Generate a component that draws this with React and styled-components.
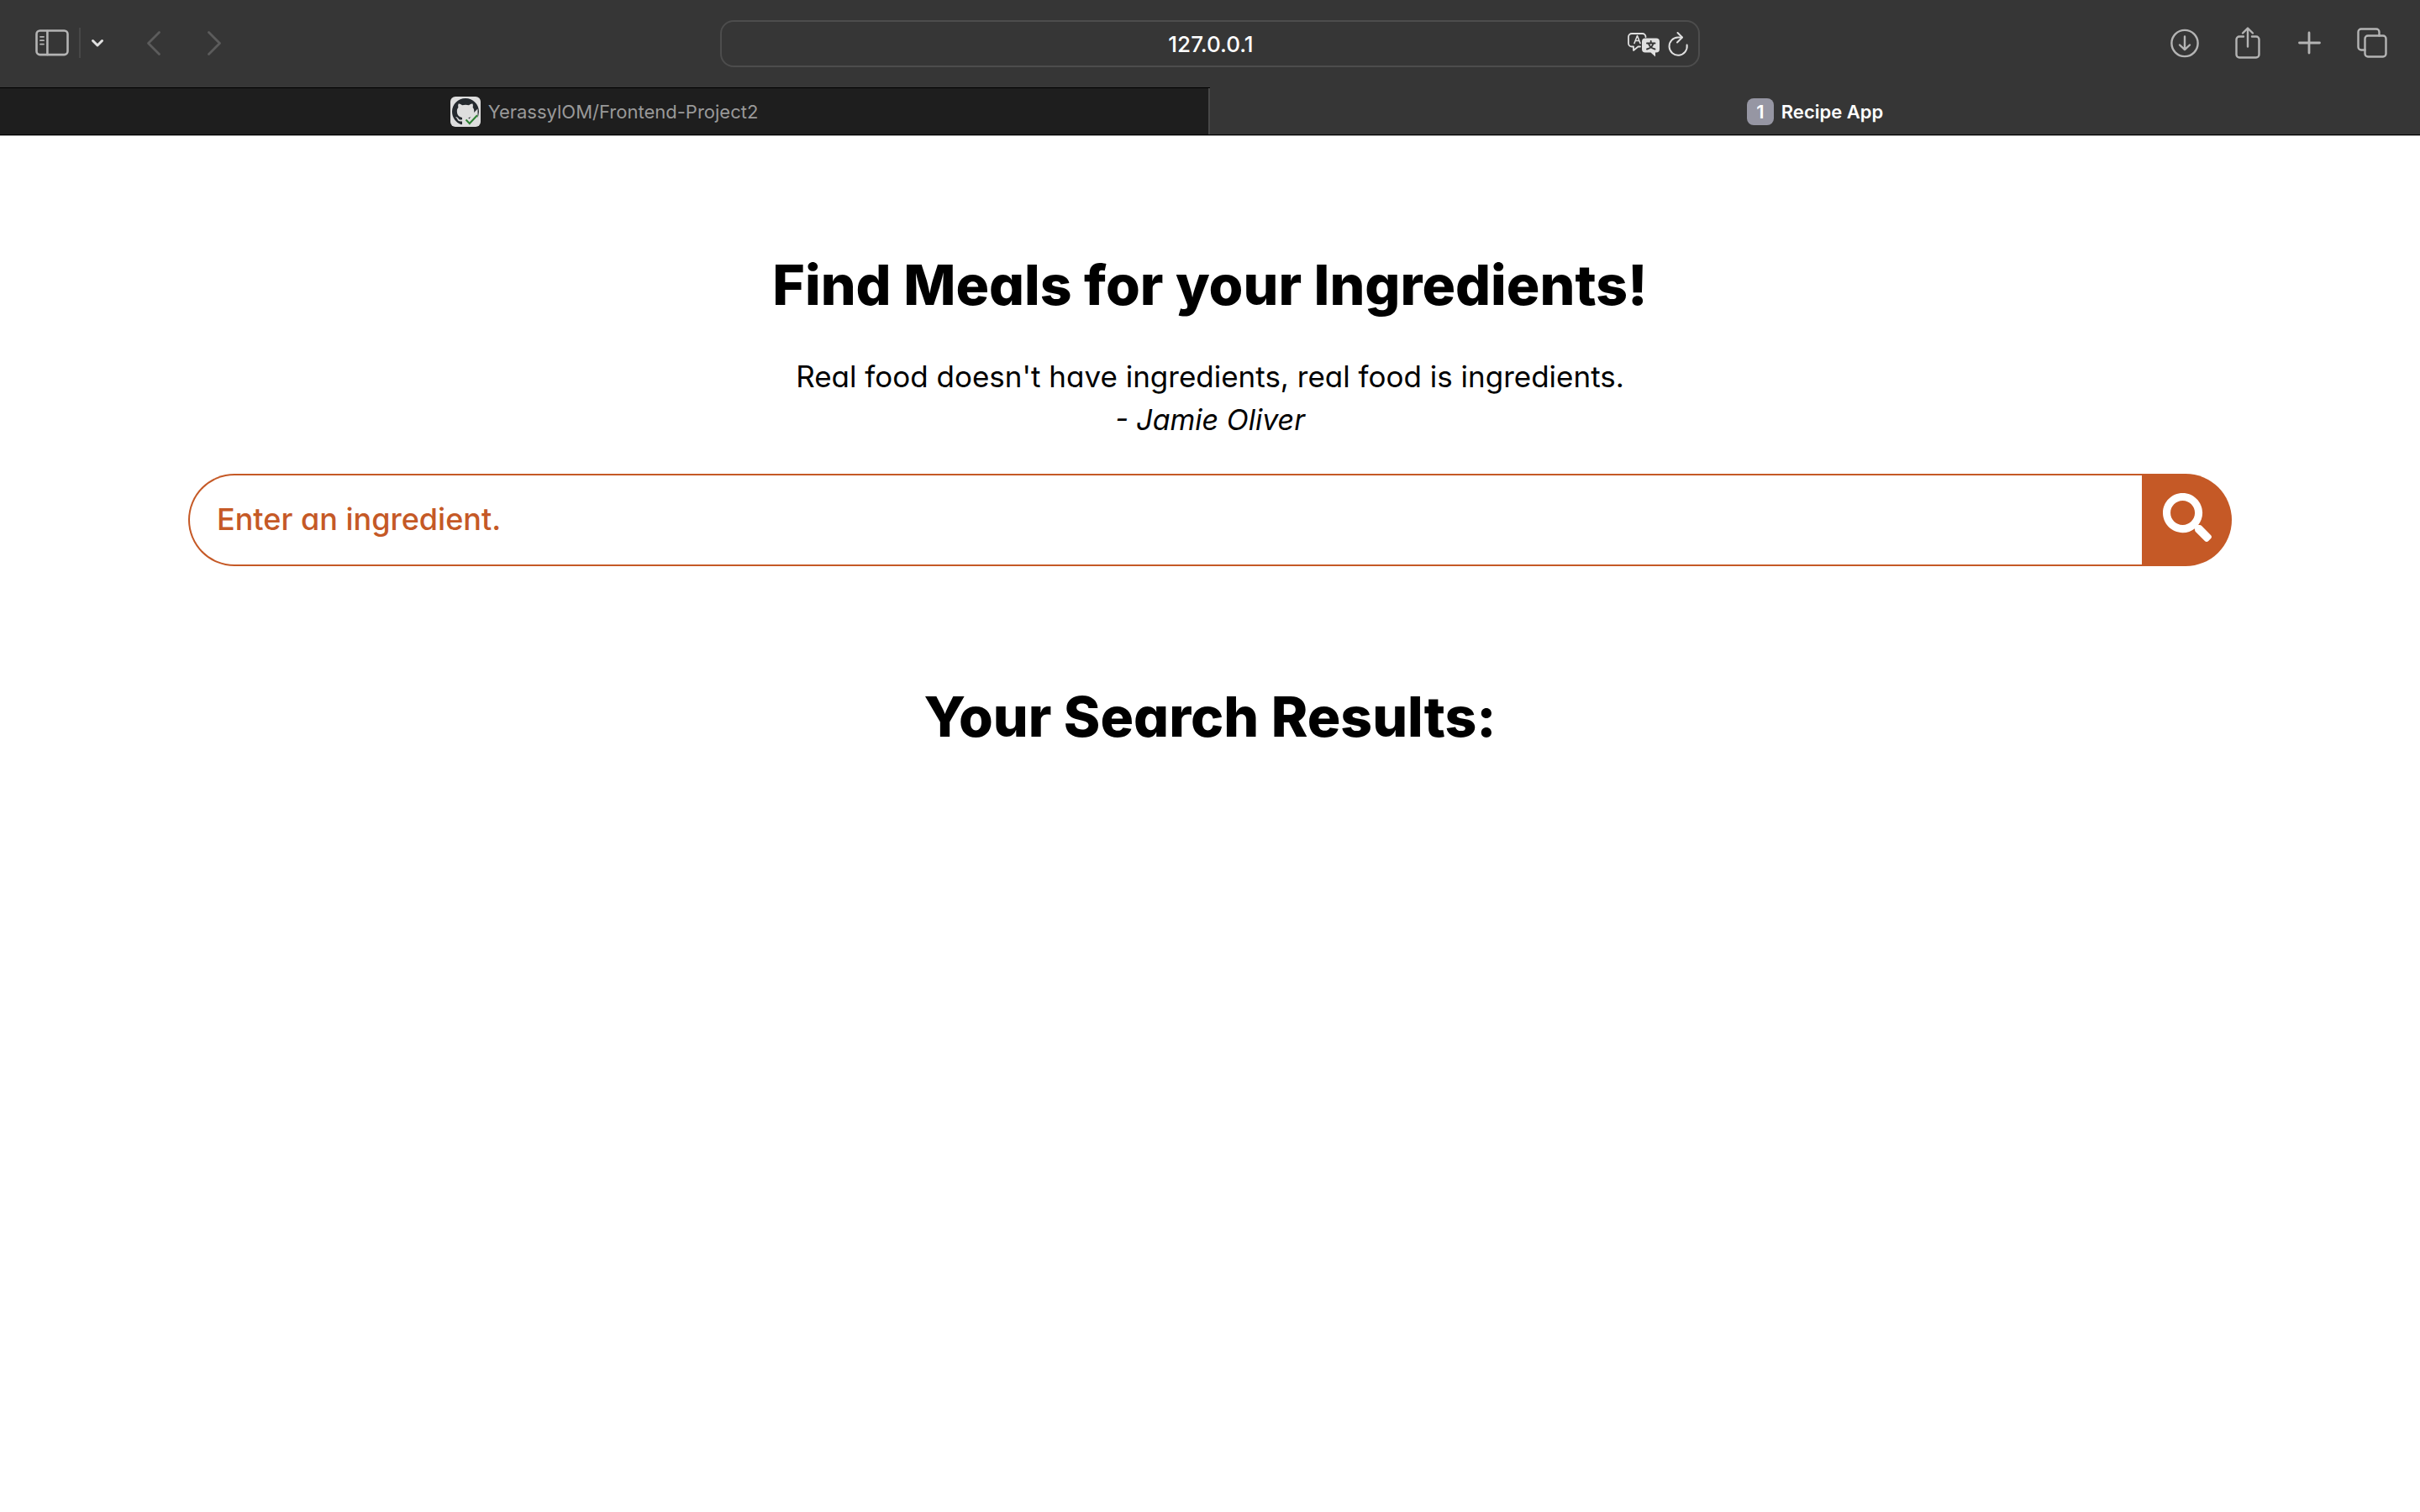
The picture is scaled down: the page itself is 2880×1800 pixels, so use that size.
import React from "react";
import styled, { createGlobalStyle } from "styled-components";
import { FaSearch } from "react-icons/fa";

const accent = "#c55926";

const GlobalStyle = createGlobalStyle`
  *, *::before, *::after { box-sizing: border-box; }
  body {
    margin: 0;
    background: #fff;
    color: #000;
    font-family: Inter, "Liberation Sans", sans-serif;
  }
  button, input { font: inherit; color: inherit; }
`;

const Toolbar = styled.header`
  display: grid;
  grid-template-columns: 1fr minmax(0, 1166px) 1fr;
  align-items: center;
  height: 104px;
  padding: 0 20px;
  background: #363636;
`;

const ToolGroup = styled.div`
  display: flex;
  align-items: center;
  justify-content: ${(p) => (p.$end ? "flex-end" : "flex-start")};
  padding: ${(p) => (p.$end ? "0 0 3px" : "0 0 2px 10px")};
`;

const IconButton = styled.button`
  display: flex;
  align-items: center;
  justify-content: center;
  width: ${(p) => p.$width || 40}px;
  height: 40px;
  padding: 0;
  border: 0;
  background: none;
  color: ${(p) => p.$color || "#b4b4b4"};

  svg {
    display: block;
    flex: none;
    fill: none;
    stroke: currentColor;
    stroke-linecap: round;
    stroke-linejoin: round;
  }
`;

const Divider = styled.span`
  width: 2px;
  height: 36px;
  background: #484848;
`;

const AddressBar = styled.div`
  display: grid;
  grid-template-columns: 88px 1fr 88px;
  align-items: center;
  height: 56px;
  border: 2px solid #4d4d4d;
  border-radius: 16px;
`;

const AddressInput = styled.input`
  grid-column: 2;
  min-width: 0;
  padding: 1px 0 0 2px;
  border: 0;
  outline: 0;
  background: none;
  color: #fff;
  font-size: 26px;
  font-weight: 500;
  line-height: 32px;
  text-align: center;
`;

const AddressActions = styled.div`
  display: flex;
  justify-content: flex-end;
  gap: 5px;
  padding-right: 8px;
`;

const TabBar = styled.nav`
  display: grid;
  grid-template-columns: 1fr 1fr;
  height: 58px;
  border-bottom: 1px solid #a9a9a9;
`;

const Tab = styled.button`
  display: flex;
  align-items: center;
  justify-content: center;
  gap: 9px;
  padding: ${(p) => (p.$active ? "1px 0 0" : "0 2px 0 0")};
  border: 0 solid #000;
  border-width: ${(p) => (p.$active ? "0 0 1px" : "1px 0 1px")};
  background: ${(p) => (p.$active ? "#363636" : "#1e1e1e")};
  box-shadow: ${(p) => (p.$active ? "none" : "inset -2px 0 #484848")};
  color: ${(p) => (p.$active ? "#fff" : "#999")};
  font-size: 22px;
  font-weight: ${(p) => (p.$active ? 600 : 400)};
`;

const TabBadge = styled.span`
  display: grid;
  place-items: center;
  width: 32px;
  height: 32px;
  border-radius: 8px;
  background: #9696a3;
  font-size: 22px;
`;

const Page = styled.main`
  padding: 129px 224px 80px;
`;

const Heading = styled.h2`
  margin: 0;
  font-size: 66px;
  font-weight: 800;
  line-height: 96px;
  text-align: center;
  font-feature-settings: "cv11";
`;

const Quote = styled.blockquote`
  margin: 35px 0 38px;
  font-size: 35px;
  line-height: 52px;
  text-align: center;
  font-feature-settings: "cv11";
`;

const Author = styled.cite`
  display: block;
  font-size: 34px;
`;

const SearchForm = styled.form`
  display: flex;
  height: 110px;
  margin-bottom: 131px;
`;

const SearchInput = styled.input`
  flex: 1;
  min-width: 0;
  padding: 0 32px 2px;
  border: 2px solid ${accent};
  border-right: 0;
  border-radius: 55px 0 0 55px;
  outline: 0;
  background: #fff;
  color: ${accent};
  font-size: 36px;
  font-weight: 500;
  font-feature-settings: "cv11";

  &::placeholder { color: ${accent}; opacity: 1; }
`;

const SearchButton = styled.button`
  display: flex;
  align-items: center;
  justify-content: center;
  width: 107px;
  padding: 0 0 6px;
  border: 0;
  border-radius: 0 55px 55px 0;
  background: ${accent};
  color: #fff;
  font-size: 58px;
`;

const SidebarIcon = () => (
  <svg width="40" height="32" viewBox="0 0 40 32" strokeWidth="2.6">
    <rect x="1.5" y="1.5" width="37" height="28.6" rx="4" />
    <path d="M14.4 2v28" />
    <path d="M6 8.8h4M6 13.2h4M6 17.6h4" strokeWidth="1.8" />
  </svg>
);

const GithubIcon = () => (
  <svg width="36" height="36" viewBox="0 0 36 36" aria-hidden="true">
    <rect width="36" height="36" rx="6" fill="#dedede" />
    <path
      transform="translate(2 2)"
      fill="#24292e"
      d="M16 0C7.160 0 0 7.160 0 16c0 7.080 4.580 13.060 10.940 15.180.8.140 1.100-.340 1.100-.760 0-.380-.020-1.640-.020-2.980-4.020.740-5.060-.980-5.380-1.880-.180-.460-.960-1.880-1.640-2.260-.560-.300-1.360-1.040-.020-1.060 1.260-.020 2.160 1.160 2.460 1.640 1.440 2.420 3.740 1.740 4.660 1.320.140-1.040.560-1.740 1.020-2.140-3.560-.400-7.280-1.780-7.280-7.900 0-1.740.620-3.180 1.640-4.300-.160-.400-.720-2.040.160-4.240 0 0 1.340-.420 4.400 1.640 1.280-.360 2.640-.540 4-.540s2.720.180 4 .540c3.060-2.080 4.400-1.640 4.400-1.640.880 2.200.320 3.840.160 4.240 1.020 1.120 1.640 2.540 1.640 4.300 0 6.140-3.740 7.500-7.300 7.900.580.500 1.080 1.460 1.080 2.960 0 2.140-.020 3.860-.020 4.400 0 .420.300.920 1.100.760A16.030 16.030 0 0 0 32 16C32 7.160 24.840 0 16 0z"
    />
    <path d="M14 25v8.500h18.500V14.500l-5 5-5 7-4-4z" fill="#dedede" />
    <path d="M18.500 27.500l4.300 4.500 9.200-9.800" fill="none" stroke="#2c8032" strokeWidth="2" />
  </svg>
);

export default function App() {
  return (
    <>
      <GlobalStyle />
      <Toolbar>
        <ToolGroup>
          <IconButton aria-label="Show sidebar" $width={64}><SidebarIcon /></IconButton>
          <Divider />
          <IconButton aria-label="Tab groups" $color="#e2e2e2">
            <svg width="16" height="12" viewBox="0 0 16 12" strokeWidth="3"><path d="M2.500 3.500 8 9l5.500-5.500" /></svg>
          </IconButton>
          <IconButton aria-label="Back" $color="#5c5c5c" $width={94}>
            <svg width="20" height="32" viewBox="0 0 20 32" strokeWidth="2.800"><path d="M16.500 3.500 3.500 16.500l13 13" /></svg>
          </IconButton>
          <IconButton aria-label="Forward" $color="#5c5c5c" $width={50}>
            <svg width="20" height="32" viewBox="0 0 20 32" strokeWidth="2.800"><path d="M3.500 3.500l13 13-13 13" /></svg>
          </IconButton>
        </ToolGroup>
        <AddressBar>
          <AddressInput aria-label="Address" defaultValue="127.0.0.1" />
          <AddressActions>
            <IconButton aria-label="Translate" $color="#e0e0e0">
              <svg width="40" height="32" viewBox="0 0 40 32" strokeWidth="1.800">
                <path d="M16 19.500h-2.500L8 24v-4.500H6a4 4 0 0 1-4-4V8a4 4 0 0 1 4-4h12.500a4 4 0 0 1 4 4" />
                <path d="M9 15.500 12.500 6.500l3.500 9M10.200 12.500h4.600" strokeWidth="1.600" />
                <path d="M22 9.500h13a4 4 0 0 1 4 4v9a4 4 0 0 1-4 4h-1v5l-5.500-5H22a4 4 0 0 1-4-4v-9a4 4 0 0 1 4-4z" fill="currentColor" stroke="none" />
                <path d="M24 15.500h9.500M28.700 13v2M31.500 16c-1 3-3.500 5.500-7.500 6.500M26 16c1 3 3.500 5.500 7.500 6.500" stroke="#363636" strokeWidth="1.900" />
              </svg>
            </IconButton>
            <IconButton aria-label="Reload" $color="#e0e0e0" $width={32}>
              <svg width="28" height="32" viewBox="0 0 28 32" strokeWidth="2">
                <path d="M24.600 17.500A10.600 10.600 0 1 1 14 8.500h4.500" />
                <path d="M13.500 3l5.500 5.500-6 6" />
              </svg>
            </IconButton>
          </AddressActions>
        </AddressBar>
        <ToolGroup $end>
          <IconButton aria-label="Downloads" $width={74}>
            <svg width="36" height="36" viewBox="0 0 36 36" strokeWidth="2.400">
              <circle cx="17" cy="18.500" r="15.600" />
              <path d="M17 10.500V26M11 20.500l6 5.700 6-5.700" />
            </svg>
          </IconButton>
          <IconButton aria-label="Share" $width={74}>
            <svg width="32" height="40" viewBox="0 0 32 40" strokeWidth="2.400">
              <path d="M11 12.500H6a3.500 3.500 0 0 0-3.500 3.500v18A3.500 3.500 0 0 0 6 37.500h20a3.500 3.500 0 0 0 3.500-3.500V16a3.500 3.500 0 0 0-3.500-3.500h-5" />
              <path d="M16 24.500V3M10 8.500 16 2.500l6 6" />
            </svg>
          </IconButton>
          <IconButton aria-label="New tab" $width={74}>
            <svg width="28" height="28" viewBox="0 0 28 28" strokeWidth="2.800"><path d="M13 2v24M1.500 14h24" /></svg>
          </IconButton>
          <IconButton aria-label="Tab overview" $width={74}>
            <svg width="36" height="36" viewBox="0 0 36 36" strokeWidth="2.400">
              <rect x="9.500" y="9.500" width="25" height="25" rx="3.500" />
              <path d="M9.500 26.500H5A3.500 3.500 0 0 1 1.500 23V5A3.500 3.500 0 0 1 5 1.500h18A3.500 3.500 0 0 1 26.500 5v4.500" />
            </svg>
          </IconButton>
        </ToolGroup>
      </Toolbar>
      <TabBar aria-label="Open tabs">
        <Tab>
          <GithubIcon />
          YerassylOM/Frontend-Project2
        </Tab>
        <Tab $active>
          <TabBadge>1</TabBadge>
          Recipe App
        </Tab>
      </TabBar>
      <Page>
        <Heading as="h1">Find Meals for your Ingredients!</Heading>
        <Quote>
          Real food doesn't have ingredients, real food is ingredients.
          <Author>- Jamie Oliver</Author>
        </Quote>
        <SearchForm onSubmit={(e) => e.preventDefault()}>
          <SearchInput aria-label="Ingredient" placeholder="Enter an ingredient." />
          <SearchButton type="submit" aria-label="Search"><FaSearch /></SearchButton>
        </SearchForm>
        <Heading>Your Search Results:</Heading>
      </Page>
    </>
  );
}
